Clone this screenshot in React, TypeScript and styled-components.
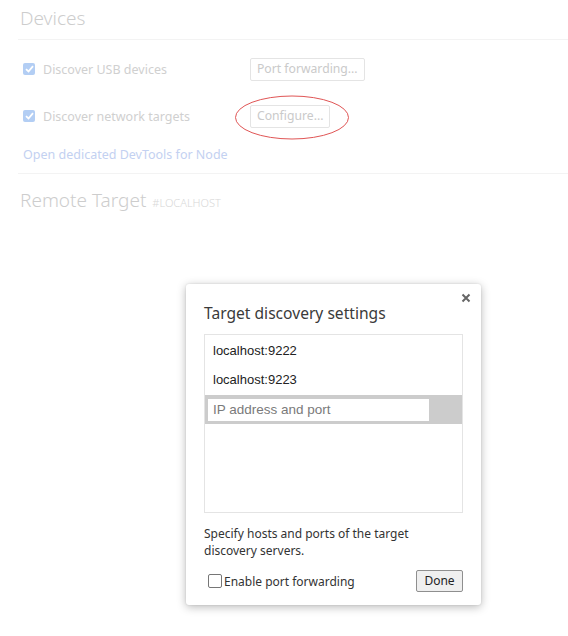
import React from "react";
import styled, { createGlobalStyle } from "styled-components";

const Global = createGlobalStyle`
  html, body { margin: 0; padding: 0; background: #fff; }
  body { font-family: "Noto Sans", "Open Sans", sans-serif; }
  #root { width: 568px; height: 636px; position: relative; overflow: hidden; }
`;

const Page = styled.div`
  padding: 0 0 0 18px;
  color: #cfcfcf;
`;

const Header = styled.div`
  font-size: 19px;
  font-weight: 300;
  color: #cdcdcd;
  padding: 4px 0 0 2px;
  height: 35px;
  line-height: 28px;
  border-bottom: 1px solid #f3f3f3;
  display: flex;
  align-items: baseline;
  gap: 6px;
`;

const Small = styled.span`
  font-size: 11px;
  text-transform: uppercase;
  color: #d8d8d8;
`;

const Row = styled.div<{ $top: number }>`
  display: flex;
  align-items: center;
  height: 24px;
  margin-top: ${(p) => p.$top}px;
  padding-left: 5px;
  font-size: 12.5px;
`;

const Label = styled.label`
  display: flex;
  align-items: center;
  gap: 8px;
  width: 227px;
  color: #d0d0d0;
`;

const FakeCheck = styled.span`
  width: 12px;
  height: 12px;
  border-radius: 2px;
  background: #b3cef4;
  display: flex;
  align-items: center;
  justify-content: center;
`;

const GhostButton = styled.span`
  position: relative;
  border: 1px solid #e4e4e4;
  border-radius: 2px;
  padding: 0 6px;
  height: 21px;
  line-height: 20px;
  color: #cacaca;
  font-size: 12.2px;
  background: #fff;
`;

const Ellipse = styled.svg`
  position: absolute;
  left: -16px;
  top: -10px;
  overflow: visible;
`;

const Link = styled.div`
  margin-top: 18px;
  padding-left: 5px;
  font-size: 12.5px;
  color: #c3d1f1;
  height: 18px;
  line-height: 18px;
  padding-bottom: 9px;
  border-bottom: 1px solid #f3f3f3;
`;

const Section2 = styled(Header)`
  border-bottom: none;
  padding-top: 12px;
`;

const Dialog = styled.div`
  position: absolute;
  left: 186px;
  top: 284px;
  width: 295px;
  height: 321px;
  box-sizing: border-box;
  background: #fff;
  border-radius: 3px;
  box-shadow: 0 2px 10px rgba(0, 0, 0, 0.28), 0 0 2px rgba(0, 0, 0, 0.12);
  padding: 17px 18px 13px 18px;
  display: flex;
  flex-direction: column;
  color: #333;
`;

const Close = styled.span`
  position: absolute;
  right: 10px;
  top: 9px;
  width: 10px;
  height: 10px;
  display: block;
  line-height: 0;
  & svg { display: block; }
`;

const Title = styled.div`
  font-size: 15.6px;
  line-height: 24px;
  color: #3a3a3a;
  margin-bottom: 9px;
`;

const List = styled.div`
  border: 1px solid #e4e4e4;
  height: 179px;
  box-sizing: border-box;
  padding-top: 1px;
  font-family: "Liberation Sans", Arial, sans-serif;
  font-size: 13px;
`;

const Item = styled.div`
  height: 29px;
  line-height: 29px;
  padding-left: 8px;
  color: #222;
`;

const EditRow = styled.div`
  height: 29px;
  margin-top: 1px;
  background: #cccccc;
  display: flex;
  align-items: center;
  padding-left: 3px;
`;

const Input = styled.input`
  width: 221px;
  height: 22px;
  box-sizing: border-box;
  border: none;
  outline: none;
  padding: 0 5px;
  font-family: "Liberation Sans", Arial, sans-serif;
  font-size: 13.5px;
  &::placeholder { color: #7a7a7a; }
`;

const Help = styled.div`
  margin-top: 12px;
  font-size: 12px;
  line-height: 17px;
  color: #333;
  width: 230px;
`;

const Bottom = styled.div`
  margin-top: auto;
  display: flex;
  align-items: center;
  justify-content: space-between;
  padding-left: 4px;
`;

const CheckLabel = styled.label`
  display: flex;
  align-items: center;
  gap: 2px;
  font-size: 12px;
  color: #333;
`;

const Box = styled.span`
  width: 12px;
  height: 12px;
  border: 1px solid #767676;
  border-radius: 2px;
  background: #fff;
`;

const Done = styled.button`
  width: 47px;
  height: 22px;
  box-sizing: border-box;
  border: 1px solid #8f8f8f;
  border-radius: 2px;
  background: #efefef;
  font-family: "Noto Sans", "Open Sans", sans-serif;
  font-size: 12px;
  color: #222;
  padding: 0;
  line-height: 18px;
`;

const Tick = () => (
  <svg width="9" height="8" viewBox="0 0 9 8">
    <path d="M1 4.2 L3.5 6.5 L8 1.2" stroke="#fff" strokeWidth="1.8" fill="none" />
  </svg>
);

export default function App() {
  return (
    <>
      <Global />
      <Page>
        <Header>Devices</Header>
        <Row $top={17}>
          <Label>
            <FakeCheck><Tick /></FakeCheck>
            Discover USB devices
          </Label>
          <GhostButton>Port forwarding...</GhostButton>
        </Row>
        <Row $top={23}>
          <Label>
            <FakeCheck><Tick /></FakeCheck>
            Discover network targets
          </Label>
          <GhostButton>
            Configure...
            <Ellipse width="114" height="43">
              <ellipse cx="57" cy="21.5" rx="56.5" ry="21.5" fill="none" stroke="#e05555" strokeWidth="1" />
            </Ellipse>
          </GhostButton>
        </Row>
        <Link>Open dedicated DevTools for Node</Link>
        <Section2>
          Remote Target <Small>#localhost</Small>
        </Section2>
      </Page>
      <Dialog>
        <Close>
          <svg width="10" height="10" viewBox="0 0 10 10">
            <path d="M1.5 1.5 L8.5 8.5 M8.5 1.5 L1.5 8.5" stroke="#666" strokeWidth="2" />
          </svg>
        </Close>
        <Title>Target discovery settings</Title>
        <List>
          <Item>localhost:9222</Item>
          <Item>localhost:9223</Item>
          <EditRow>
            <Input placeholder="IP address and port" />
          </EditRow>
        </List>
        <Help>Specify hosts and ports of the target discovery servers.</Help>
        <Bottom>
          <CheckLabel>
            <Box />
            Enable port forwarding
          </CheckLabel>
          <Done>Done</Done>
        </Bottom>
      </Dialog>
    </>
  );
}
